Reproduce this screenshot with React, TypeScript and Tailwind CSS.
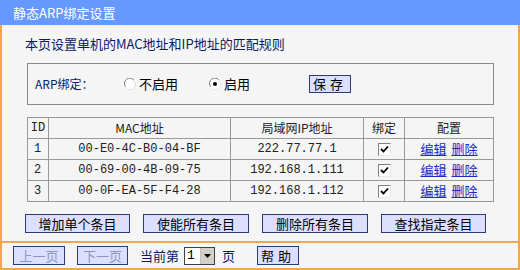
import React from 'react';

const font = { fontFamily: '"Noto Sans CJK SC", "DejaVu Sans", sans-serif' };
const mono = { fontFamily: '"Liberation Mono", "Noto Sans CJK SC", monospace' };

interface Entry {
  id: number;
  mac: string;
  ip: string;
  bound: boolean;
}

const entries: Entry[] = [
  { id: 1, mac: '00-E0-4C-B0-04-BF', ip: '222.77.77.1', bound: true },
  { id: 2, mac: '00-69-00-4B-09-75', ip: '192.168.1.111', bound: true },
  { id: 3, mac: '00-0F-EA-5F-F4-28', ip: '192.168.1.112', bound: true },
];

function Radio({ checked }: { checked?: boolean }) {
  return (
    <svg width="12" height="12" viewBox="0 0 12 12" className="shrink-0">
      <circle cx="6" cy="6" r="5.5" fill="#fff" />
      <path d="M10 2.2A5.2 5.2 0 0 0 1.6 8.8" stroke="#808080" strokeWidth="1" fill="none" />
      <path d="M2.2 9.8A5.2 5.2 0 0 0 10.4 3.2" stroke="#e0e0e0" strokeWidth="1" fill="none" />
      {checked && <circle cx="6" cy="6" r="2" fill="#000" />}
    </svg>
  );
}

function CheckBox() {
  return (
    <span className="inline-flex h-[13px] w-[13px] items-center justify-center border border-b-[#e8e8e8] border-l-[#808080] border-r-[#e8e8e8] border-t-[#808080] bg-white align-middle">
      <svg width="9" height="9" viewBox="0 0 9 9">
        <path d="M1 4l2.5 2.5L8 1.5" stroke="#000" strokeWidth="1.8" fill="none" />
      </svg>
    </span>
  );
}

function Btn({ children, className = '', disabled }: { children: React.ReactNode; className?: string; disabled?: boolean }) {
  return (
    <div
      className={`flex items-center justify-center border border-[#2a3a7a] bg-[#dcdfff] text-[13px] ${disabled ? 'text-[#8c96b8]' : 'text-black'} ${className}`}
      style={font}
    >
      {children}
    </div>
  );
}

export default function App() {
  return (
    <div className="h-[270px] w-[520px] overflow-hidden bg-[#f5f5f5]" style={font}>
      {/* Title bar */}
      <div className="flex h-[25px] items-center bg-[#6699ff] pl-[13px] text-[13px] text-white">
        静态ARP绑定设置
      </div>

      <div className="h-[245px] border-x-2 border-b-2 border-[#f4a64c]">
        <div className="h-[216px] border-t-2 border-[#fbf3e0]">
          <div className="pl-[23px] pt-[8px] text-[13px] leading-[18px] text-[#0b1a66]">
            本页设置单机的MAC地址和IP地址的匹配规则
          </div>

          {/* ARP bind fieldset */}
          <div className="ml-[25px] mt-[10px] flex h-[42px] w-[467px] items-center border border-[#8a8a8a] text-[12px]">
            <span className="ml-[7px] w-[89px] text-[#0b1a66]">ARP绑定：</span>
            <span className="flex items-center gap-[3px]">
              <Radio />
              <span className="text-[13px]">不启用</span>
            </span>
            <span className="ml-[31px] flex items-center gap-[3px]">
              <Radio checked />
              <span className="text-[13px]">启用</span>
            </span>
            <Btn className="ml-[59px] h-[18px] w-[42px] tracking-[4px]">保存</Btn>
          </div>

          {/* Table */}
          <table className="ml-[25px] mt-[12px] w-[467px] border-collapse text-[12px] text-[#222]">
            <thead>
              <tr className="h-[21px]">
                <th className="w-[21px] border border-[#999] font-normal" style={mono}>ID</th>
                <th className="w-[182px] border border-[#999] font-normal">MAC地址</th>
                <th className="w-[133px] border border-[#999] font-normal">局域网IP地址</th>
                <th className="w-[41px] border border-[#999] font-normal">绑定</th>
                <th className="border border-[#999] font-normal">配置</th>
              </tr>
            </thead>
            <tbody>
              {entries.map((e) => (
                <tr key={e.id} className="h-[21px]">
                  <td className="border border-[#999] pl-[6px]" style={mono}>{e.id}</td>
                  <td className="border border-[#999] text-center" style={mono}>{e.mac}</td>
                  <td className="border border-[#999] text-center" style={mono}>{e.ip}</td>
                  <td className="border border-[#999] text-center leading-none">
                    <CheckBox />
                  </td>
                  <td className="border border-[#999] text-center text-[13px]">
                    <span className="text-[#1a2bc8] underline">编辑</span>
                    <span className="ml-[5px] text-[#1a2bc8] underline">删除</span>
                  </td>
                </tr>
              ))}
            </tbody>
          </table>

          {/* Action buttons */}
          <div className="ml-[23px] mt-[12px] flex h-[19px] gap-[13px]">
            <Btn className="w-[105px]">增加单个条目</Btn>
            <Btn className="w-[106px]">使能所有条目</Btn>
            <Btn className="w-[106px]">删除所有条目</Btn>
            <Btn className="w-[105px]">查找指定条目</Btn>
          </div>
        </div>

        {/* Pager */}
        <div className="flex h-[27px] items-center border-t-2 border-[#f4a64c] pl-[11px] text-[13px]">
          <Btn disabled className="h-[19px] w-[52px]">上一页</Btn>
          <Btn disabled className="ml-[12px] h-[19px] w-[51px]">下一页</Btn>
          <span className="ml-[12px] text-[#0b1a66]">当前第</span>
          <div className="ml-[5px] flex h-[18px] w-[31px] border border-[#404040] bg-white">
            <span className="flex-1 pl-[2px] text-[13px] leading-[16px]" style={mono}>1</span>
            <span className="flex w-[14px] items-center justify-center border-l border-[#c0c0c0] bg-[#d4d0c8]">
              <svg width="7" height="4" viewBox="0 0 7 4"><path d="M0 0h7L3.5 4z" fill="#000" /></svg>
            </span>
          </div>
          <span className="ml-[7px] text-[#0b1a66]">页</span>
          <Btn className="ml-[22px] h-[19px] w-[42px] tracking-[4px]">帮助</Btn>
        </div>
      </div>
    </div>
  );
}
